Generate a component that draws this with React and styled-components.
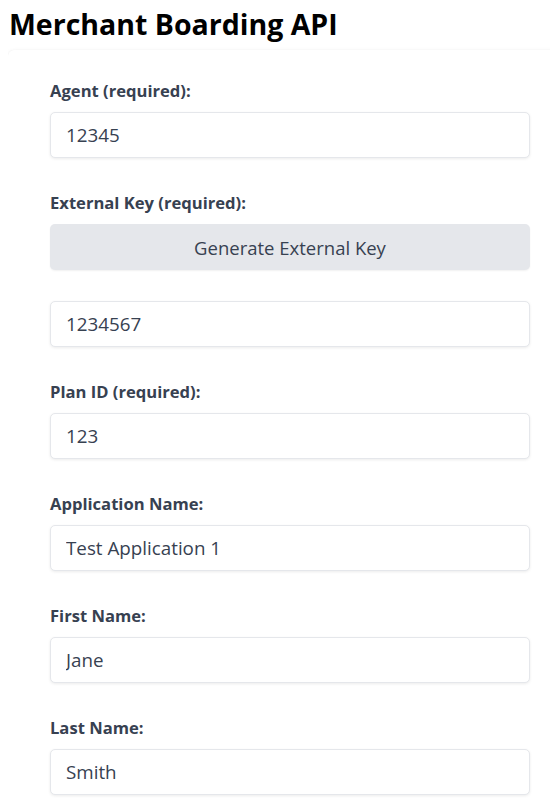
import React from 'react'
import styled, { createGlobalStyle } from 'styled-components'

const GlobalStyle = createGlobalStyle`
  html, body {
    overflow-x: hidden;
  }
  body {
    margin: 8px;
    background: #ffffff;
    font-family: "Open Sans", "Noto Sans", sans-serif;
  }
`

const Title = styled.h1`
  margin: 0 0 10px 1px;
  font-size: 28.5px;
  line-height: 32px;
  font-weight: 700;
  color: #000000;
`

const Card = styled.form`
  width: 564px;
  box-sizing: border-box;
  padding: 31px 42px 40px;
  background: #ffffff;
  border-radius: 6px;
  box-shadow: 0 1px 4px rgba(0, 0, 0, 0.08), 0 0 1px rgba(0, 0, 0, 0.05);
`

const Field = styled.div`
  display: flex;
  flex-direction: column;
  margin-bottom: 35px;
`

const Label = styled.label`
  font-size: 16.6px;
  line-height: 20px;
  font-weight: 700;
  color: #374151;
  margin-bottom: 11px;
`

const Input = styled.input`
  box-sizing: border-box;
  width: 100%;
  height: 46px;
  padding: 0 15px;
  border: 1px solid #e5e7eb;
  border-radius: 5px;
  box-shadow: 0 1px 3px rgba(0, 0, 0, 0.08);
  font-family: inherit;
  font-size: 18.8px;
  color: #374151;
  background: #ffffff;
  margin-top: ${(p) => (p.$spaced ? '31px' : '0')};
  outline: none;
`

const Button = styled.button`
  box-sizing: border-box;
  width: 100%;
  height: 46px;
  border: none;
  border-radius: 5px;
  background: #e5e7eb;
  box-shadow: 0 1px 2px rgba(0, 0, 0, 0.06);
  font-family: inherit;
  font-size: 18.5px;
  color: #374151;
  cursor: pointer;
`

const fields = [
  { id: 'plan', label: 'Plan ID (required):', value: '123' },
  { id: 'app', label: 'Application Name:', value: 'Test Application 1' },
  { id: 'first', label: 'First Name:', value: 'Jane' },
  { id: 'last', label: 'Last Name:', value: 'Smith' },
]

export default function App() {
  return (
    <>
      <GlobalStyle />
      <Title>Merchant Boarding API</Title>
      <Card onSubmit={(e) => e.preventDefault()}>
        <Field>
          <Label htmlFor="agent">Agent (required):</Label>
          <Input id="agent" defaultValue="12345" />
        </Field>
        <Field>
          <Label htmlFor="extkey">External Key (required):</Label>
          <Button type="button">Generate External Key</Button>
          <Input id="extkey" defaultValue="1234567" $spaced />
        </Field>
        {fields.map((f) => (
          <Field key={f.id}>
            <Label htmlFor={f.id}>{f.label}</Label>
            <Input id={f.id} defaultValue={f.value} />
          </Field>
        ))}
      </Card>
    </>
  )
}
